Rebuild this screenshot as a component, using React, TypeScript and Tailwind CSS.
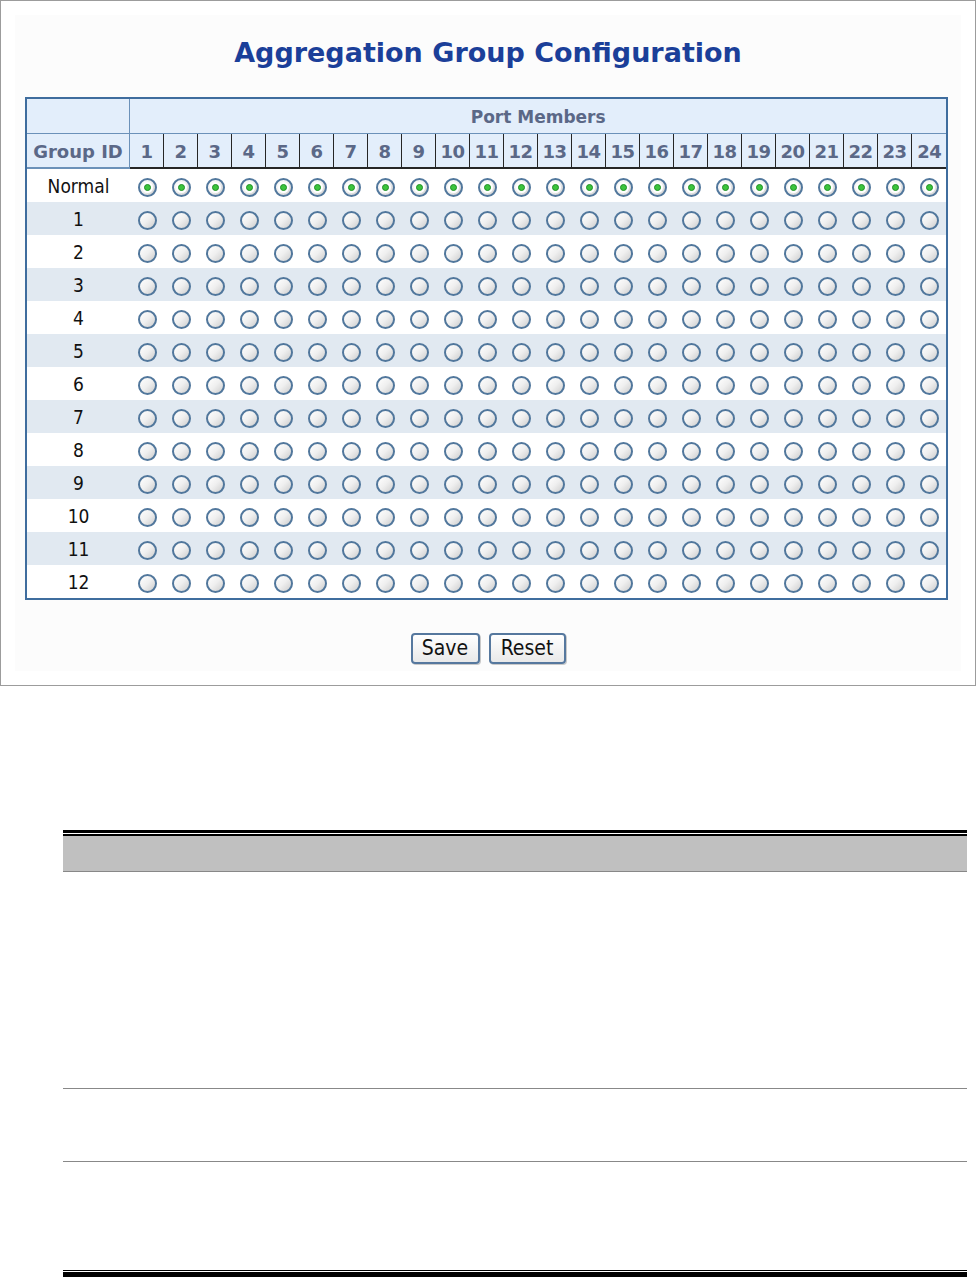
const ports = Array.from({ length: 24 }, (_, i) => i + 1)
const groups = ['Normal', ...Array.from({ length: 12 }, (_, i) => String(i + 1))]

const headFont = { fontFamily: '"DejaVu Sans", Verdana, sans-serif' }
const bodyFont = { fontFamily: '"DejaVu Sans Condensed", "Liberation Sans", sans-serif' }

function Radio({ checked }: { checked?: boolean }) {
  return (
    <span className="inline-flex h-[19px] w-[19px] items-center justify-center rounded-full border-2 border-[#51779c] bg-linear-to-br from-white via-[#efefef] to-[#cdcdcd] align-middle">
      {checked && (
        <span className="flex h-[11px] w-[11px] items-center justify-center rounded-full bg-white">
          <span className="h-[7px] w-[7px] rounded-full border border-[#1f8f25] bg-[#3cc43c]" />
        </span>
      )}
    </span>
  )
}

function Button({ label, width }: { label: string; width: string }) {
  return (
    <button
      className={`${width} h-[31px] rounded-[4px] border-2 border-[#56789e] bg-linear-to-b from-white to-[#e9e9e9] text-[21px] leading-none text-[#111] shadow-[1px_1px_0_#c9c9c9]`}
      style={bodyFont}
    >
      {label}
    </button>
  )
}

function AggregationTable() {
  return (
    <table className="ml-[10px] mt-[31px] w-[923px] table-fixed border-separate border-spacing-0 border-2 border-[#3f6d9e]">
      <colgroup>
        <col className="w-[103px]" />
        {ports.map((p) => (
          <col key={p} className="w-[34px]" />
        ))}
      </colgroup>
      <thead>
        <tr className="h-[35px] bg-[#e3eefb]">
          <th className="border-r border-b border-[#6b91b9]" />
          <th
            colSpan={24}
            className="border-b border-[#6b91b9] pt-[4px] text-center text-[17px] font-bold text-[#5b6887]"
            style={headFont}
          >
            Port Members
          </th>
        </tr>
        <tr className="h-[35px] bg-[#e3eefb] text-[18px] font-bold text-[#5b6887]" style={headFont}>
          <th className="border-r border-b-2 border-[#6b91b9] pt-[2px] text-center">Group ID</th>
          {ports.map((p) => (
            <th
              key={p}
              className={`border-b-2 border-[#262626] pt-[2px] text-center tracking-[-0.5px] ${p < 24 ? 'border-r' : ''}`}
            >
              {p}
            </th>
          ))}
        </tr>
      </thead>
      <tbody>
        {groups.map((g, i) => (
          <tr key={g} className={`h-[33px] ${i % 2 === 1 ? 'bg-[#e1e9f1]' : 'bg-white'}`}>
            <td className="pt-[1px] text-center text-[19px] text-[#111]" style={bodyFont}>
              {g}
            </td>
            {ports.map((p) => (
              <td key={p} className="text-center">
                <Radio checked={i === 0} />
              </td>
            ))}
          </tr>
        ))}
      </tbody>
    </table>
  )
}

export default function App() {
  return (
    <div className="min-h-[1277px] w-[976px] bg-white">
      <div className="h-[686px] border border-[#9c9c9c] p-[14px]">
        <div className="h-full bg-[#fcfcfc] pt-[24px]">
          <h1
            className="text-center text-[27px] font-bold leading-none text-[#1b3f99]"
            style={headFont}
          >
            Aggregation Group Configuration
          </h1>
          <AggregationTable />
          <div className="mt-[33px] flex justify-center gap-[9px]">
            <Button label="Save" width="w-[69px]" />
            <Button label="Reset" width="w-[77px]" />
          </div>
        </div>
      </div>

      <div className="ml-[63px] mt-[144px] w-[904px]">
        <div className="border-t-[3px] border-black">
          <div className="mt-[1px] border-t-2 border-black" />
        </div>
        <div className="h-[36px] border-b border-[#888] bg-[#c0c0c0]" />
        <div className="h-[217px] border-b border-[#888]" />
        <div className="h-[73px] border-b border-[#888]" />
        <div className="h-[108px]" />
        <div className="border-t border-black">
          <div className="mt-[1px] border-t-[5px] border-black" />
        </div>
      </div>
    </div>
  )
}
